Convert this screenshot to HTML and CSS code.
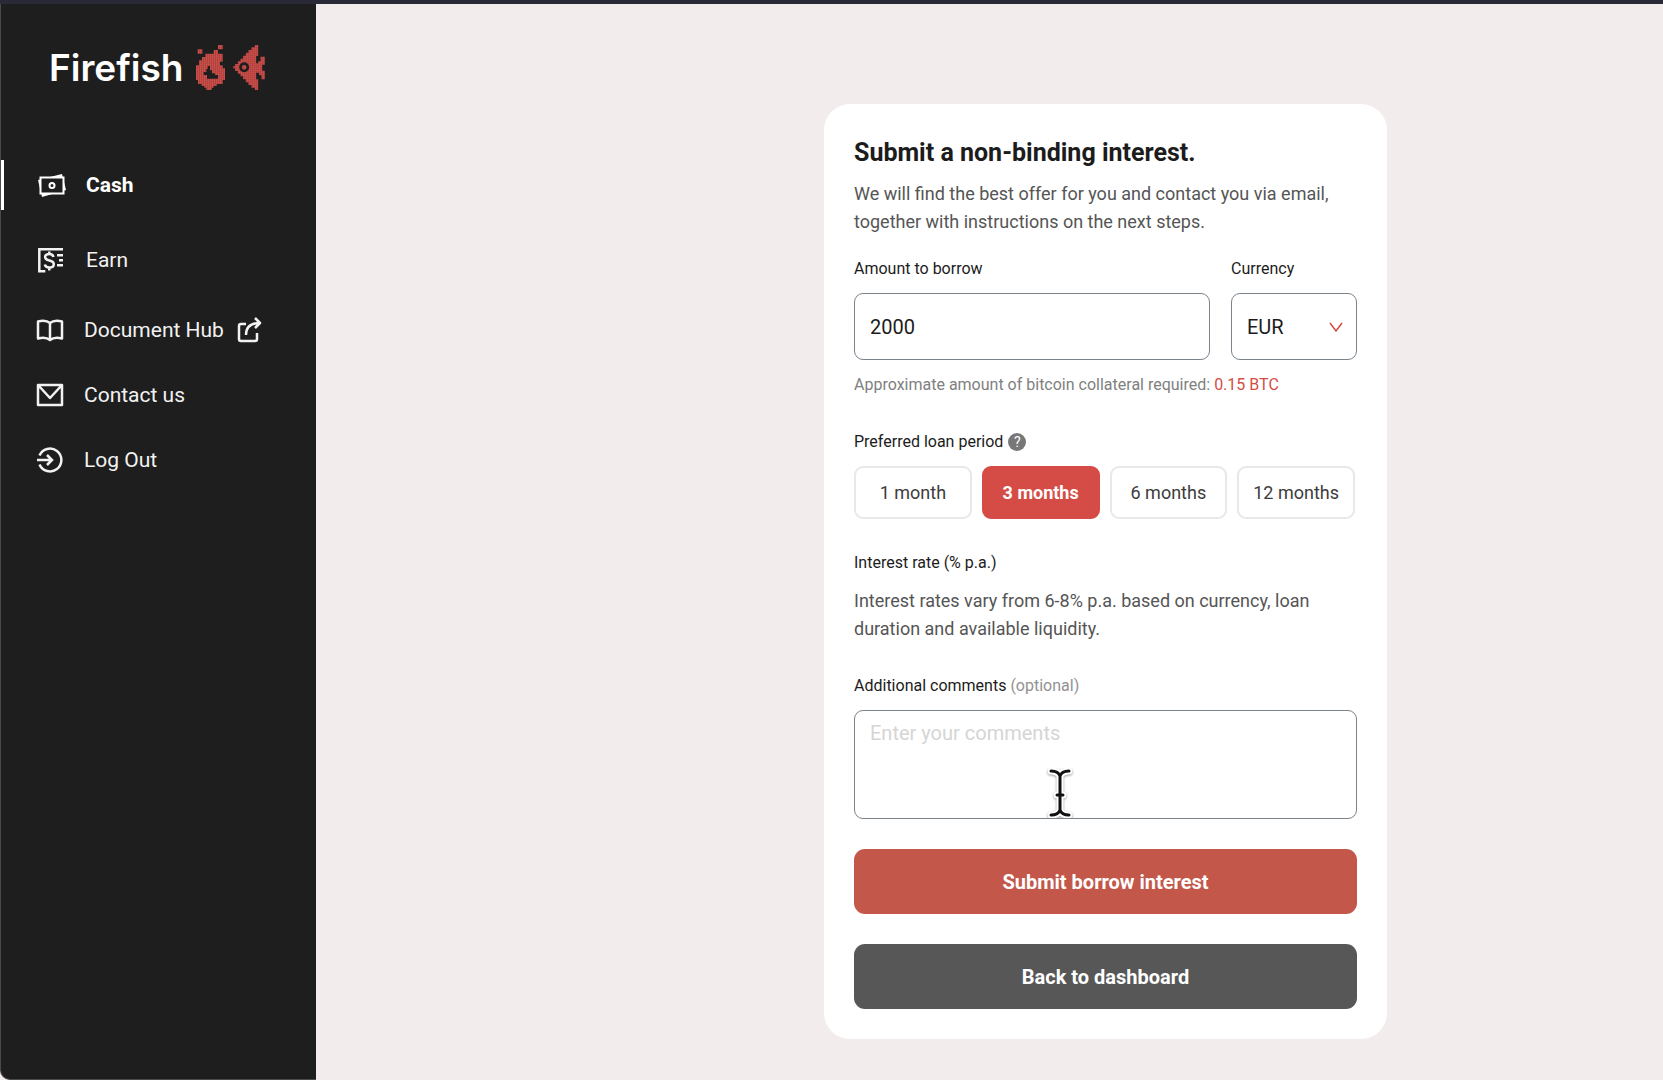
FILE: index.html
```html
<!DOCTYPE html>
<html lang="en">
  <head>
    <meta charset="UTF-8" />
    <meta name="viewport" content="width=device-width, initial-scale=1.0" />
    <title>Firefish</title>
    <link rel="stylesheet" href="styles.css">
  </head>
  <body>
    <aside class="sidebar">
      <a href="#" class="logo">
        <span class="logo-text">Firefish</span>
        <svg class="logo-fire" viewBox="9 7 87 135" aria-hidden="true">
          <defs>
            <pattern id="mesh" width="6" height="6" patternUnits="userSpaceOnUse">
              <path d="M0 0h6v6H0z" fill="#dc524e" />
              <path d="M0 0h6v1.500H1.500V6H0z" fill="#963b38" />
            </pattern>
          </defs>
          <path fill="url(#mesh)" fill-rule="evenodd" d="M75 7h14v13H75zM14 20h14v13H14zM62 22h13v11h14v24h-8v11h8v9h7v35h-7v12H71v6h-9v5h-6v7H40v-7h-6v-5h-8v-6H15v-12H9V68h9V53h9V43h10V33h25zM44 70v9h-4v9h-8v9h10v11h33V97h-9v-5h-9v-9h-6V70z" />
        </svg>
        <svg class="logo-fish" viewBox="10 7 95 135" aria-hidden="true">
          <path fill="url(#mesh)" d="M85 7v33h-6v22h6v-6h7V42h13v24h-8v18h8v26H95V98h-7v-8h-9v20h6v32H75v-7H65v-8h-9v-8h-8v-9h-8v-9h-8v-8h-8v-8h-8v-8h-6v-6h6v-7h8v-8h8v-8h8v-9h8v-9h8v-8h9v-8h10V7z" />
          <circle cx="43" cy="74" r="11" fill="none" stroke="#1e1e1e" stroke-width="8" />
        </svg>
      </a>
      <nav class="menu">
        <a href="#" class="menu-item active">
          <svg class="icon" viewBox="0 0 28 26" fill="none" stroke="currentColor" stroke-width="2" aria-hidden="true">
            <path d="M0 8L24 2l4 16L4 25z" fill="currentColor" stroke="none" />
            <path d="M2.500 5.500h23v16h-23z" fill="#1e1e1e" />
            <circle cx="14" cy="13.500" r="2.500" />
          </svg>
          Cash
        </a>
        <a href="#" class="menu-item earn">
          <svg class="icon" viewBox="0 0 28 26" fill="none" stroke="currentColor" stroke-width="2.500" aria-hidden="true">
            <path d="M25 2.300H1.300v22h6M19 8.300h6M21 13.200h4M19 18.300h6" />
            <path d="M15.500 10c-.5-2-2-3-4.200-3-2.500 0-4.200 1-4.200 3s2 3 4.200 3.500 4.500 1.500 4.500 3.700-2 3.300-4.500 3.300-4-1-4.500-3M11.300 4.500V7M11.300 20.500v3" />
          </svg>
          Earn
        </a>
        <a href="#" class="menu-item small">
          <svg class="icon" viewBox="0 0 28 26" fill="none" stroke="currentColor" stroke-width="2.500" stroke-linejoin="round" aria-hidden="true">
            <path d="M14 6C11 3.500 6 3.500 2 4.500v17c4-1 9-1 12 1.500 3-2.500 8-2.500 12-1.500v-17C22 3.500 17 3.500 14 6zv16" />
          </svg>
          Document Hub
          <svg class="icon external" viewBox="0 0 28 26" fill="none" stroke="currentColor" stroke-width="2.500" stroke-linejoin="round" aria-hidden="true">
            <path d="M10 7H5a2 2 0 0 0-2 2v13a2 2 0 0 0 2 2h14a2 2 0 0 0 2-2v-6" />
            <path d="M10 18c0-8 4-12 14-12M19 1l5 5-5 5" />
          </svg>
        </a>
        <a href="#" class="menu-item small">
          <svg class="icon" viewBox="0 0 28 26" fill="none" stroke="currentColor" stroke-width="2.500" stroke-linejoin="round" aria-hidden="true">
            <path d="M2 3h24v20H2zl12 13L26 3" />
          </svg>
          Contact us
        </a>
        <a href="#" class="menu-item small">
          <svg class="icon" viewBox="0 0 28 26" fill="none" stroke="currentColor" stroke-width="2.500" aria-hidden="true">
            <path d="M3.500 8.500a11.400 11.400 0 1 1 0 9M1 13h15M11 8l5 5-5 5" />
          </svg>
          Log Out
        </a>
      </nav>
    </aside>

    <main class="content">
      <form class="card">
        <h1>Submit a non-binding interest.</h1>
        <p class="text">We will find the best offer for you and contact you via email, together with instructions on the next steps.</p>

        <div class="amount-row">
          <div class="field amount">
            <label for="amount">Amount to borrow</label>
            <input type="text" id="amount" value="2000" />
          </div>
          <div class="field currency">
            <label for="currency">Currency</label>
            <div class="select-wrap">
              <select id="currency">
                <option>EUR</option>
                <option>USD</option>
                <option>CHF</option>
              </select>
              <svg class="chevron" viewBox="0 0 14 10" fill="none" stroke="currentColor" stroke-width="1.500" aria-hidden="true"><path d="M1 1l6 8 6-8" /></svg>
            </div>
          </div>
        </div>
        <p class="hint">Approximate amount of bitcoin collateral required: <span class="btc">0.15 BTC</span></p>

        <p class="label period-label">Preferred loan period <button type="button" class="help" aria-label="Help">?</button></p>
        <div class="periods">
          <button type="button" class="period">1 month</button>
          <button type="button" class="period selected">3 months</button>
          <button type="button" class="period">6 months</button>
          <button type="button" class="period">12 months</button>
        </div>

        <p class="label">Interest rate (% p.a.)</p>
        <p class="text rate-text">Interest rates vary from 6-8% p.a. based on currency, loan duration and available liquidity.</p>

        <div class="field comments">
          <label for="comments">Additional comments <span class="optional">(optional)</span></label>
          <textarea id="comments" placeholder="Enter your comments"></textarea>
          <svg class="cursor" viewBox="0 0 28 50" fill="none" stroke-linecap="round" aria-hidden="true">
            <path class="cursor-edge" d="M5 3c5 0 8 2 9 5 1-3 4-5 9-5M5 47c5 0 8-2 9-5 1 3 4 5 9 5M14 8v34M11 27h6" />
            <path class="cursor-line" d="M5 3c5 0 8 2 9 5 1-3 4-5 9-5M5 47c5 0 8-2 9-5 1 3 4 5 9 5M14 8v34M11 27h6" />
          </svg>
        </div>

        <div class="actions">
          <button type="submit" class="btn primary">Submit borrow interest</button>
          <button type="button" class="btn secondary">Back to dashboard</button>
        </div>
      </form>
    </main>
  </body>
</html>
```
FILE: styles.css
```css
* {
  margin: 0;
  padding: 0;
  box-sizing: border-box;
}

body {
  display: flex;
  min-height: 100vh;
  border-top: 4px solid #2a2937;
  background-color: #f2ecec;
  font-family: Roboto, "Liberation Sans", sans-serif;
  color: #1c1c1c;
}

input,
select,
textarea,
button {
  font-family: inherit;
}

/* sidebar */
.sidebar {
  width: 316px;
  flex-shrink: 0;
  background-color: #1e1e1e;
  border-left: 1px solid #4a4a4a;
  border-bottom: 1px solid #4a4a4a;
  border-bottom-left-radius: 10px;
}

.logo {
  display: flex;
  align-items: center;
  height: 126px;
  padding-left: 48px;
  text-decoration: none;
}

.logo-text {
  margin-right: 13px;
  font-family: Inter, "Liberation Sans", sans-serif;
  font-size: 37px;
  font-weight: 600;
  color: #fff;
}

.logo-fire {
  width: 29px;
  height: 45px;
  margin-right: 8px;
}

.logo-fish {
  width: 32px;
  height: 45px;
}

.menu {
  padding-top: 30px;
}

.menu-item {
  display: flex;
  align-items: center;
  height: 50px;
  margin-bottom: 25px;
  padding-left: 34px;
  border-left: 3px solid transparent;
  color: #f2f2f2;
  font-size: 21px;
  text-decoration: none;
}

.menu-item.active {
  border-left-color: #fff;
  color: #fff;
  font-weight: 700;
}

.menu-item.earn {
  margin-bottom: 20px;
}

.menu-item.small {
  margin-bottom: 15px;
  padding-left: 32px;
}

.icon {
  width: 28px;
  height: 26px;
  margin-right: 20px;
  overflow: visible;
}

.icon.external {
  margin: 0 0 0 12px;
}

/* form */
.content {
  flex: 1;
  display: flex;
  justify-content: center;
  align-items: flex-start;
  padding: 100px 0 40px 232px;
}

.card {
  width: 563px;
  padding: 30px;
  border-radius: 26px;
  background-color: #fff;
}

h1 {
  margin-bottom: 8px;
  font-size: 25px;
  line-height: 38px;
}

.text {
  font-size: 18px;
  line-height: 28px;
  color: #555;
}

.label,
label {
  display: block;
  font-size: 16px;
  line-height: 24px;
}

.amount-row {
  display: flex;
  gap: 21px;
  margin-top: 21px;
}

.amount {
  flex: 1;
}

.currency {
  width: 126px;
}

input,
select,
textarea {
  display: block;
  width: 100%;
  border: 1px solid #7b838b;
  border-radius: 9px;
  background-color: #fff;
  color: #1c1c1c;
  font-size: 20px;
}

input,
select {
  height: 67px;
  margin-top: 12px;
  padding: 0 15px;
  appearance: none;
}

.select-wrap {
  position: relative;
}

.chevron {
  position: absolute;
  right: 14px;
  top: 29px;
  width: 14px;
  height: 10px;
  color: #d44c45;
  pointer-events: none;
}

.hint {
  margin-top: 13px;
  font-size: 16px;
  line-height: 24px;
  color: #808080;
}

.btc {
  color: #d44c45;
}

.period-label {
  display: flex;
  align-items: center;
  gap: 5px;
  margin-top: 33px;
}

.help {
  width: 18px;
  height: 18px;
  border: none;
  border-radius: 50%;
  background-color: #787878;
  color: #fff;
  font-size: 14px;
  line-height: 18px;
}

.periods {
  display: grid;
  grid-template-columns: repeat(4, 1fr);
  gap: 10px;
  margin: 12px 2px 32px 0;
}

.period {
  height: 53px;
  border: 2px solid #e8e8e8;
  border-radius: 9px;
  background-color: #fff;
  color: #3c3c3c;
  font-size: 18px;
}

.period.selected {
  border-color: #d44c45;
  background-color: #d44c45;
  color: #fff;
  font-weight: 700;
}

.rate-text {
  margin-top: 12px;
}

.comments {
  position: relative;
  margin-top: 31px;
}

.optional {
  color: #929292;
}

textarea {
  height: 109px;
  margin-top: 12px;
  padding: 10px 15px;
  line-height: 24px;
  resize: none;
}

textarea::placeholder {
  color: #d5d5d5;
}

/* text cursor over the comments box */
.cursor {
  position: absolute;
  left: 192px;
  bottom: 1px;
  width: 28px;
  height: 50px;
  pointer-events: none;
}

.cursor-edge {
  stroke: #fff;
  stroke-width: 7px;
  filter: drop-shadow(0 1px 1px #999);
}

.cursor-line {
  stroke: #111;
  stroke-width: 3px;
}

.actions {
  display: grid;
  gap: 30px;
  margin-top: 30px;
}

.btn {
  height: 65px;
  border: none;
  border-radius: 11px;
  color: #fff;
  font-size: 20px;
  font-weight: 700;
}

.primary {
  background-color: #c3574a;
}

.secondary {
  background-color: #575757;
}
```
